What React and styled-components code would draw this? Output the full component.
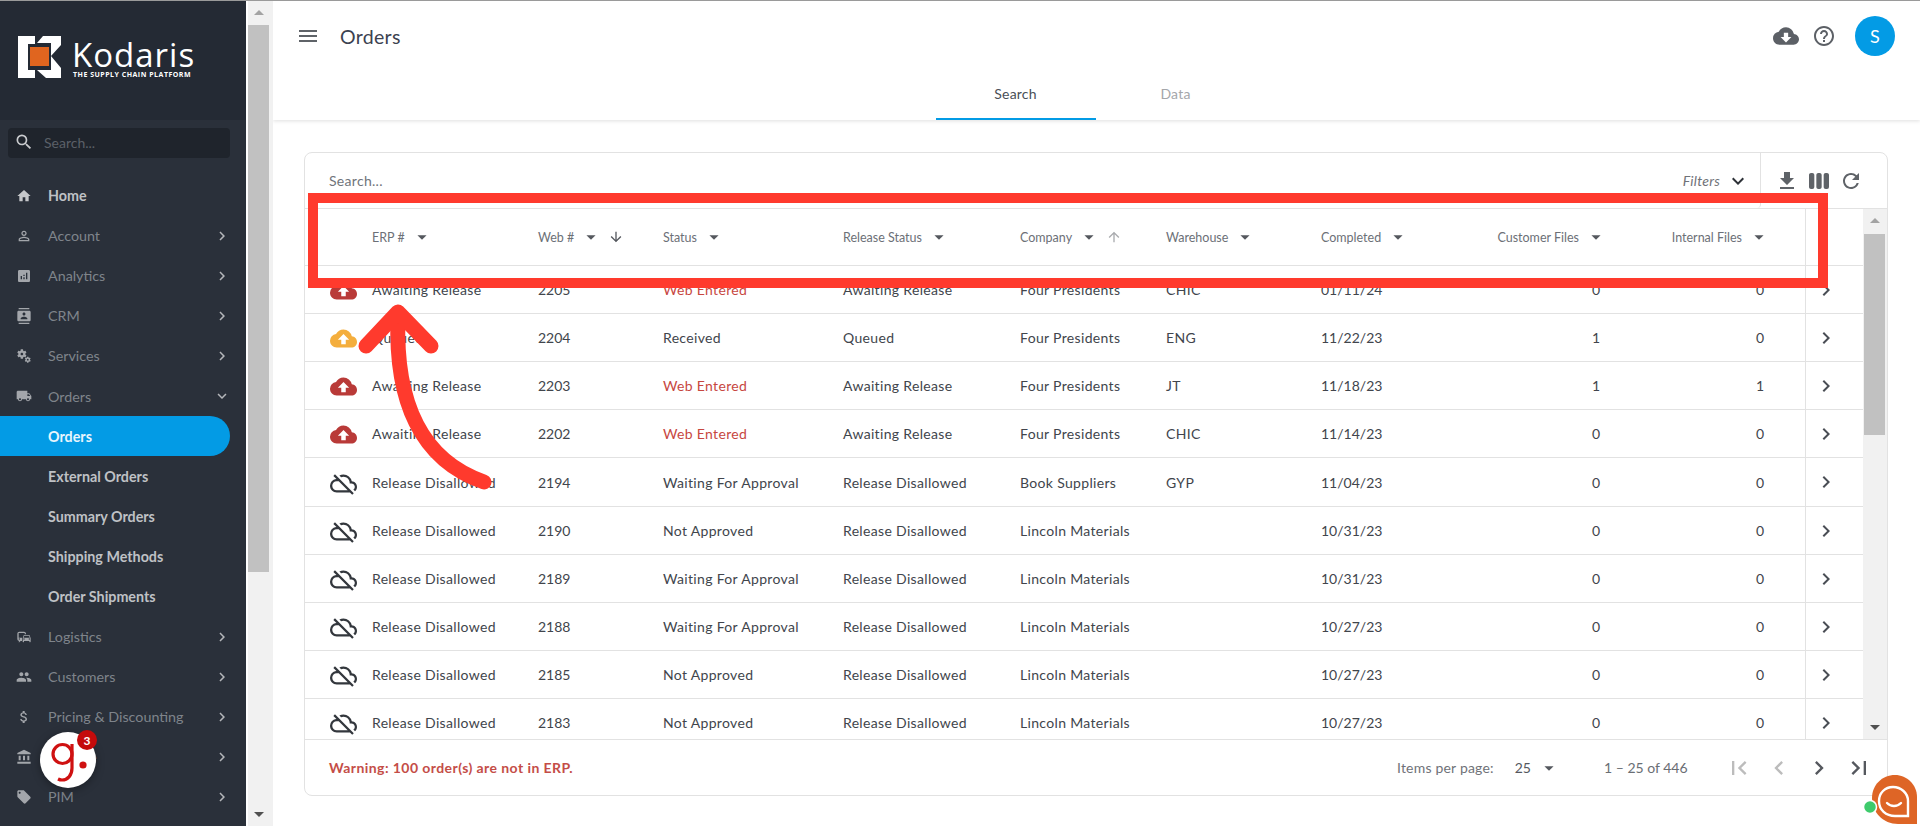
import React from "react";
import styled, { createGlobalStyle } from "styled-components";
import {
  MdHome,
  MdPermIdentity,
  MdAnalytics,
  MdContacts,
  MdMiscellaneousServices,
  MdLocalShipping,
  MdCommute,
  MdPeople,
  MdAttachMoney,
  MdAccountBalance,
  MdLocalOffer,
  MdChevronRight,
  MdChevronLeft,
  MdKeyboardArrowDown,
  MdSearch,
  MdMenu,
  MdCloudDownload,
  MdHelpOutline,
  MdFileDownload,
  MdViewWeek,
  MdRefresh,
  MdArrowDropDown,
  MdArrowDropUp,
  MdArrowDownward,
  MdArrowUpward,
  MdCloudUpload,
  MdOutlineCloudOff,
  MdFirstPage,
  MdLastPage,
} from "react-icons/md";

const FONT = `Lato, "Open Sans", sans-serif`;
const COLUMNS = "67px 166px 125px 180px 177px 146px 155px 160px 122px 202px 58px";

const GlobalStyle = createGlobalStyle`
  html, body {
    margin: 0;
    padding: 0;
    height: 100%;
    overflow: hidden;
    background: #fff;
    font-family: ${FONT};
  }
  * {
    box-sizing: border-box;
  }
`;

const Page = styled.div`
  position: relative;
  display: flex;
  width: 1920px;
  height: 826px;
  overflow: hidden;
  border-top: 1px solid #9a9a9a;
`;

/* sidebar */
const Sidebar = styled.aside`
  width: 246px;
  flex: none;
  background: #2a303a;
  overflow: hidden;
`;

const LogoBar = styled.div`
  display: flex;
  height: 119px;
  padding: 35px 0 0 18px;
  background: #242a34;
`;

const LogoText = styled.div`
  display: flex;
  flex-direction: column;
  margin-left: 10px;
  color: #fff;
`;

const LogoName = styled.span`
  font-family: "Open Sans", sans-serif;
  font-size: 33px;
  line-height: 28px;
  margin-top: 5px;
  letter-spacing: 1px;
`;

const LogoTag = styled.span`
  font-family: "Open Sans", sans-serif;
  font-size: 7px;
  font-weight: 700;
  line-height: 8px;
  letter-spacing: 0.5px;
  margin: 2px 0 0 1px;
  white-space: nowrap;
`;

const SideSearch = styled.div`
  display: flex;
  align-items: center;
  height: 30px;
  margin: 8px 16px 17.5px 8px;
  padding: 0 6px 2px 6px;
  gap: 10px;
  border-radius: 4px;
  background: #1f242c;
  color: #c9cbce;
  font-size: 14px;

  span {
    color: #5b6068;
  }
`;

const NavRow = styled.div`
  display: flex;
  align-items: center;
  height: 40.1px;
  width: 230px;
  padding: ${(p) => (p.$sub && !p.$active ? "1px" : "0")} 0 0 ${(p) => (p.$sub ? 48 : 16)}px;
  font-size: 14.3px;
  white-space: nowrap;
  font-weight: ${(p) => (p.$bright ? 700 : 400)};
  color: ${(p) => (p.$active ? "#e8f5fd" : p.$bright ? "#bfc1c5" : "#7f848b")};
  background: ${(p) => (p.$active ? "#039be5" : "transparent")};
  border-radius: ${(p) => (p.$active ? "0 20px 20px 0" : "0")};
`;

const NavIcon = styled.span`
  display: flex;
  justify-content: center;
  width: 16px;
  margin-right: 16px;
  font-size: 16px;
  color: ${(p) => (p.$bright ? "#c6c8cb" : "#a3a6ab")};
`;

const NavLabel = styled.span`
  flex: 1;
`;

const NavArrow = styled.span`
  display: flex;
  margin-right: -1px;
  font-size: 18px;
  color: #b4b6ba;
`;

const PageScroll = styled.div`
  position: relative;
  width: 27px;
  flex: none;
  background: #f1f1f1;
  border-left: 2px solid #fff;
  border-right: 4px solid #f1f1f1;
`;

const PageThumb = styled.div`
  position: absolute;
  top: 24px;
  left: 0;
  right: 0;
  height: 547px;
  background: #c1c1c1;
`;

const ScrollArrow = styled.span`
  position: absolute;
  left: 50%;
  transform: translateX(-50%);
  display: flex;
  font-size: 24px;
  color: ${(p) => (p.$dim ? "#a3a3a3" : "#505050")};
  ${(p) => (p.$up ? "top: 0;" : "bottom: 0;")}
`;

/* main */
const Main = styled.main`
  flex: 1;
  min-width: 0;
  display: flex;
  flex-direction: column;
  background: #fff;
`;

const TopBar = styled.header`
  height: 119px;
  flex: none;
  display: flex;
  flex-direction: column;
  box-shadow: 0 1px 4px rgba(0, 0, 0, 0.13);
`;

const TitleRow = styled.div`
  display: flex;
  align-items: center;
  height: 70px;
  padding: 0 25px 0 23px;
`;

const MenuIcon = styled.span`
  display: flex;
  font-size: 24px;
  color: #5f6368;
  margin-right: 20px;
`;

const Title = styled.h1`
  flex: 1;
  margin: 0;
  font-size: 19.5px;
  font-weight: 400;
  color: #3c4250;
  letter-spacing: 0.3px;
`;

const TopIcon = styled.span`
  display: flex;
  font-size: ${(p) => p.$size || 24}px;
  color: #5c6066;
  margin-right: ${(p) => p.$gap}px;
`;

const Avatar = styled.div`
  display: flex;
  align-items: center;
  justify-content: center;
  width: 40px;
  height: 40px;
  border-radius: 50%;
  background: #039be5;
  color: #fff;
  font-size: 18px;
`;

const Tabs = styled.nav`
  display: flex;
  justify-content: center;
  height: 49px;
  padding-right: 2px;
`;

const Tab = styled.div`
  display: flex;
  align-items: center;
  justify-content: center;
  width: 160px;
  padding-bottom: 3px;
  font-size: 14px;
  letter-spacing: 0.2px;
  color: ${(p) => (p.$active ? "#4a4f57" : "#a4a6aa")};
  border-bottom: 2px solid ${(p) => (p.$active ? "#039be5" : "transparent")};
`;

const Content = styled.div`
  padding: 32px 32px 32px 31px;
`;

const Card = styled.section`
  display: flex;
  flex-direction: column;
  height: 644px;
  border: 1px solid #e2e2e2;
  border-radius: 8px;
  overflow: hidden;
`;

const Toolbar = styled.div`
  display: flex;
  height: 56px;
  flex: none;
  border-bottom: 1px solid #e2e2e2;
`;

const ToolSearch = styled.div`
  flex: 1;
  display: flex;
  align-items: center;
  padding: 0 10px 0 24px;
  border-right: 1px solid #e2e2e2;
  border-radius: 0 0 4px 0;
  font-size: 14px;
  letter-spacing: 0.3px;
  color: #70747a;
`;

const ToolSearchText = styled.span`
  flex: 1;
`;

const FiltersLabel = styled.span`
  font-style: italic;
  font-size: 14px;
  letter-spacing: 0.25px;
  color: #6f7278;
  margin-right: 6px;
`;

const FiltersIcon = styled.span`
  display: flex;
  font-size: 24px;
  color: #2e3238;
`;

const ToolIcons = styled.div`
  display: flex;
  align-items: center;
  width: 126px;
  padding: 0 0 0 14px;
  gap: 8px;
  font-size: 24px;
  color: #5f6368;

  svg {
    display: block;
  }
`;

const GridWrap = styled.div`
  display: flex;
  flex: 1;
  min-height: 0;
`;

const Table = styled.div`
  flex: 1;
  min-width: 0;
  display: flex;
  flex-direction: column;
`;

const HeadRow = styled.div`
  display: grid;
  grid-template-columns: ${COLUMNS};
  height: 57px;
  flex: none;
  border-bottom: 1px solid #e2e2e2;
`;

const HeadCell = styled.div`
  display: flex;
  align-items: center;
  justify-content: ${(p) => (p.$right ? "flex-end" : "flex-start")};
  padding-right: ${(p) => p.$pad || 0}px;
  font-size: 12.5px;
  color: #6c7077;
  white-space: nowrap;
`;

const HeadCaret = styled.span`
  display: flex;
  margin-left: ${(p) => (p.$right ? 6 : 6)}px;
  margin-right: ${(p) => (p.$right ? -4 : 0)}px;
  font-size: 22px;
  color: #55585e;
`;

const SortArrow = styled.span`
  display: flex;
  margin-left: 6px;
  font-size: 16px;
  color: ${(p) => (p.$dim ? "#a9abae" : "#55585e")};
`;

const ActionCell = styled.div`
  display: flex;
  align-items: center;
  justify-content: center;
  border-left: 1px solid #e2e2e2;
  padding-right: 17px;
  font-size: 24px;
  color: #4a4e55;
`;

const Rows = styled.div`
  flex: 1;
  min-height: 0;
  overflow: hidden;
`;

const Row = styled.div`
  display: grid;
  grid-template-columns: ${COLUMNS};
  height: ${(p) => (p.$tall ? 49 : 48)}px;
  border-bottom: 1px solid #e2e2e2;
`;

const Cell = styled.div`
  display: flex;
  align-items: center;
  justify-content: ${(p) => (p.$right ? "flex-end" : "flex-start")};
  padding-right: ${(p) => p.$pad || 0}px;
  font-size: 14px;
  letter-spacing: ${(p) => (p.$num ? 0 : 0.33)}px;
  color: ${(p) => (p.$red ? "#c7473f" : "#41454c")};
  white-space: nowrap;
`;

const StatusIcon = styled.span`
  display: flex;
  justify-content: center;
  width: 100%;
  padding: 2px 0 0 9px;
  font-size: 27px;
  color: ${(p) => p.$color};
`;

const GridScroll = styled.div`
  position: relative;
  width: 24px;
  flex: none;
  background: #f1f1f1;
  border-left: 1px solid #f1f1f1;
  border-right: 2px solid #f1f1f1;
`;

const GridThumb = styled.div`
  position: absolute;
  top: 25px;
  left: 0;
  right: 0;
  height: 201px;
  background: #c1c1c1;
`;

const Footer = styled.footer`
  display: flex;
  align-items: center;
  height: 56px;
  flex: none;
  padding: 0 8px 0 24px;
  border-top: 1px solid #e2e2e2;
  font-size: 14px;
  color: #6f7278;
`;

const Warning = styled.span`
  flex: 1;
  font-weight: 700;
  letter-spacing: 0.43px;
  color: #c44d47;
`;

const PageLabel = styled.span`
  letter-spacing: 0.2px;
`;

const PageSizeValue = styled.span`
  margin-left: 21px;
  color: #55585e;
`;

const PageCaret = styled.span`
  display: flex;
  margin: 0 44px 0 7px;
  font-size: 22px;
  color: #55585e;
`;

const RangeText = styled.span`
  width: 115px;
  color: #6a6e74;
`;

const PageIcon = styled.span`
  display: flex;
  justify-content: center;
  width: 40px;
  font-size: 28px;
  color: ${(p) => (p.$off ? "#bcbcbc" : "#55585e")};
`;

/* things lying over the page */
const Annotation = styled.svg`
  position: absolute;
  left: 0;
  top: -1px;
  pointer-events: none;
`;

const GrooveWidget = styled.div`
  position: absolute;
  left: 40px;
  top: 731px;
  width: 56px;
  height: 56px;
  border-radius: 50%;
  background: #fff;
  box-shadow: 0 2px 8px rgba(0, 0, 0, 0.35);
`;

const GrooveBadge = styled.span`
  position: absolute;
  right: -1px;
  top: -2px;
  display: flex;
  align-items: center;
  justify-content: center;
  width: 20px;
  height: 20px;
  border-radius: 50%;
  background: #c40b0b;
  color: #fff;
  font-size: 12px;
  font-weight: 700;
`;

const ChatWidget = styled.svg`
  position: absolute;
  left: 1860px;
  top: 769px;
`;

const navTop = [
  { icon: MdHome, label: "Home", bright: true },
  { icon: MdPermIdentity, label: "Account", more: true },
  { icon: MdAnalytics, label: "Analytics", more: true },
  { icon: MdContacts, label: "CRM", more: true },
  { icon: MdMiscellaneousServices, label: "Services", more: true },
  { icon: MdLocalShipping, label: "Orders", open: true },
  { label: "Orders", sub: true, active: true },
  { label: "External Orders", sub: true },
  { label: "Summary Orders", sub: true },
  { label: "Shipping Methods", sub: true },
  { label: "Order Shipments", sub: true },
  { icon: MdCommute, label: "Logistics", more: true },
  { icon: MdPeople, label: "Customers", more: true },
  { icon: MdAttachMoney, label: "Pricing & Discounting", more: true },
  { icon: MdAccountBalance, label: "Finance", more: true },
  { icon: MdLocalOffer, label: "PIM", more: true },
];

const headers = [
  { label: "" },
  { label: "ERP #", caret: true },
  { label: "Web #", caret: true, sort: "down" },
  { label: "Status", caret: true },
  { label: "Release Status", caret: true },
  { label: "Company", caret: true, sort: "up" },
  { label: "Warehouse", caret: true },
  { label: "Completed", caret: true },
  { label: "Customer Files", caret: true, right: true },
  { label: "Internal Files", caret: true, right: true, pad: 39 },
];

const RED = "#b93a38";
const AMBER = "#f4ae3d";
const INK = "#33373d";

const orders = [
  ["up", RED, "Awaiting Release", "2205", "Web Entered", "Awaiting Release", "Four Presidents", "CHIC", "01/11/24", "0", "0"],
  ["up", AMBER, "Queued", "2204", "Received", "Queued", "Four Presidents", "ENG", "11/22/23", "1", "0"],
  ["up", RED, "Awaiting Release", "2203", "Web Entered", "Awaiting Release", "Four Presidents", "JT", "11/18/23", "1", "1"],
  ["up", RED, "Awaiting Release", "2202", "Web Entered", "Awaiting Release", "Four Presidents", "CHIC", "11/14/23", "0", "0"],
  ["off", INK, "Release Disallowed", "2194", "Waiting For Approval", "Release Disallowed", "Book Suppliers", "GYP", "11/04/23", "0", "0"],
  ["off", INK, "Release Disallowed", "2190", "Not Approved", "Release Disallowed", "Lincoln Materials", "", "10/31/23", "0", "0"],
  ["off", INK, "Release Disallowed", "2189", "Waiting For Approval", "Release Disallowed", "Lincoln Materials", "", "10/31/23", "0", "0"],
  ["off", INK, "Release Disallowed", "2188", "Waiting For Approval", "Release Disallowed", "Lincoln Materials", "", "10/27/23", "0", "0"],
  ["off", INK, "Release Disallowed", "2185", "Not Approved", "Release Disallowed", "Lincoln Materials", "", "10/27/23", "0", "0"],
  ["off", INK, "Release Disallowed", "2183", "Not Approved", "Release Disallowed", "Lincoln Materials", "", "10/27/23", "0", "0"],
];

function Logo() {
  return (
    <svg width="44" height="44" viewBox="18 36 44 44">
      <path d="M18 36h17v8h-7v26h7v8H18z" fill="#fff" />
      <path d="M43 36h18v9l-10 11 10 12v10H46l-9-8h14v-2l-7-6v-10l7-7v-2H37z" fill="#fff" />
      <rect x="28" y="45" width="23" height="23" fill="#242a34" />
      <rect x="30" y="47" width="19" height="19" fill="#e0651f" />
    </svg>
  );
}

function Head({ head }) {
  return (
    <HeadCell $right={head.right} $pad={head.pad}>
      {head.label}
      {head.caret && (
        <HeadCaret $right={head.right}>
          <MdArrowDropDown />
        </HeadCaret>
      )}
      {head.sort === "down" && (
        <SortArrow>
          <MdArrowDownward />
        </SortArrow>
      )}
      {head.sort === "up" && (
        <SortArrow $dim>
          <MdArrowUpward />
        </SortArrow>
      )}
    </HeadCell>
  );
}

function OrderRow({ order, tall }) {
  const [kind, color, erp, web, status, release, company, warehouse, completed, customer, internal] = order;
  const Icon = kind === "up" ? MdCloudUpload : MdOutlineCloudOff;
  return (
    <Row $tall={tall}>
      <Cell>
        <StatusIcon $color={color}>
          <Icon />
        </StatusIcon>
      </Cell>
      <Cell>{erp}</Cell>
      <Cell $num>{web}</Cell>
      <Cell $red={status === "Web Entered"}>{status}</Cell>
      <Cell>{release}</Cell>
      <Cell>{company}</Cell>
      <Cell>{warehouse}</Cell>
      <Cell $num>{completed}</Cell>
      <Cell $right $num $pad={3}>{customer}</Cell>
      <Cell $right $num $pad={41}>{internal}</Cell>
      <ActionCell>
        <MdChevronRight />
      </ActionCell>
    </Row>
  );
}

export default function App() {
  return (
    <>
      <GlobalStyle />
      <Page>
        <Sidebar>
          <LogoBar>
            <Logo />
            <LogoText>
              <LogoName>Kodaris</LogoName>
              <LogoTag>THE SUPPLY CHAIN PLATFORM</LogoTag>
            </LogoText>
          </LogoBar>
          <SideSearch>
            <MdSearch size={20} />
            <span>Search...</span>
          </SideSearch>
          {navTop.map((item, i) => {
            const Icon = item.icon;
            return (
              <NavRow key={i} $sub={item.sub} $active={item.active} $bright={item.sub || item.bright}>
                {Icon && (
                  <NavIcon $bright={item.bright}>
                    <Icon />
                  </NavIcon>
                )}
                <NavLabel>{item.label}</NavLabel>
                {item.more && (
                  <NavArrow>
                    <MdChevronRight />
                  </NavArrow>
                )}
                {item.open && (
                  <NavArrow>
                    <MdKeyboardArrowDown />
                  </NavArrow>
                )}
              </NavRow>
            );
          })}
        </Sidebar>
        <PageScroll>
          <PageThumb />
          <ScrollArrow $up $dim>
            <MdArrowDropUp />
          </ScrollArrow>
          <ScrollArrow>
            <MdArrowDropDown />
          </ScrollArrow>
        </PageScroll>

        <Main>
          <TopBar>
            <TitleRow>
              <MenuIcon>
                <MdMenu />
              </MenuIcon>
              <Title>Orders</Title>
              <TopIcon $size={26} $gap={13}>
                <MdCloudDownload />
              </TopIcon>
              <TopIcon $gap={19}>
                <MdHelpOutline />
              </TopIcon>
              <Avatar>S</Avatar>
            </TitleRow>
            <Tabs>
              <Tab $active>Search</Tab>
              <Tab>Data</Tab>
            </Tabs>
          </TopBar>

          <Content>
            <Card>
              <Toolbar>
                <ToolSearch>
                  <ToolSearchText>Search...</ToolSearchText>
                  <FiltersLabel>Filters</FiltersLabel>
                  <FiltersIcon>
                    <MdKeyboardArrowDown />
                  </FiltersIcon>
                </ToolSearch>
                <ToolIcons>
                  <MdFileDownload />
                  <MdViewWeek />
                  <MdRefresh />
                </ToolIcons>
              </Toolbar>
              <GridWrap>
                <Table>
                  <HeadRow>
                    {headers.map((head, i) => (
                      <Head key={i} head={head} />
                    ))}
                    <ActionCell />
                  </HeadRow>
                  <Rows>
                    {orders.map((order, i) => (
                      <OrderRow key={order[3]} order={order} tall={i === 4} />
                    ))}
                  </Rows>
                </Table>
                <GridScroll>
                  <GridThumb />
                  <ScrollArrow $up $dim>
                    <MdArrowDropUp />
                  </ScrollArrow>
                  <ScrollArrow>
                    <MdArrowDropDown />
                  </ScrollArrow>
                </GridScroll>
              </GridWrap>
              <Footer>
                <Warning>Warning: 100 order(s) are not in ERP.</Warning>
                <PageLabel>Items per page:</PageLabel>
                <PageSizeValue>25</PageSizeValue>
                <PageCaret>
                  <MdArrowDropDown />
                </PageCaret>
                <RangeText>1 – 25 of 446</RangeText>
                <PageIcon $off>
                  <MdFirstPage />
                </PageIcon>
                <PageIcon $off>
                  <MdChevronLeft />
                </PageIcon>
                <PageIcon>
                  <MdChevronRight />
                </PageIcon>
                <PageIcon>
                  <MdLastPage />
                </PageIcon>
              </Footer>
            </Card>
          </Content>
        </Main>

        <Annotation width="1920" height="826" viewBox="0 0 1920 826">
          <rect x="313" y="198" width="1510" height="85" fill="none" stroke="#ff3a2d" strokeWidth="10" />
          <path
            d="M484 482 C 420 460 395 400 398 318"
            fill="none"
            stroke="#ff3a2d"
            strokeWidth="15"
            strokeLinecap="round"
          />
          <path
            d="M366 346 L398 312 L431 346"
            fill="none"
            stroke="#ff3a2d"
            strokeWidth="15"
            strokeLinecap="round"
            strokeLinejoin="round"
          />
        </Annotation>

        <GrooveWidget>
          <svg width="56" height="56" viewBox="0 0 56 56">
            <circle cx="22.5" cy="22" r="9.5" fill="none" stroke="#cf1111" strokeWidth="3.2" />
            <path d="M32 12v24c0 7-4 12-10 12-2 0-3-.5-4-1" fill="none" stroke="#cf1111" strokeWidth="3.2" />
            <circle cx="43" cy="33" r="3.6" fill="#cf1111" />
          </svg>
          <GrooveBadge>3</GrooveBadge>
        </GrooveWidget>

        <ChatWidget width="60" height="56" viewBox="0 0 60 56">
          <path
            d="M35 5C22 5 12 15 12 28C12 42 23 54 38 54H57V27C57 15 47 5 35 5z"
            fill="#de6526"
          />
          <path
            d="M33 17C25 17 19 23 19 31C19 40 26 46 35 46H48V31C48 23 41 17 33 17z"
            fill="none"
            stroke="#fff"
            strokeWidth="2.4"
          />
          <path d="M27 33c4 4 10 4 14 0" fill="none" stroke="#fff" strokeWidth="2.4" strokeLinecap="round" />
          <circle cx="10" cy="37" r="6.5" fill="#3ecb6c" stroke="#fff" strokeWidth="1.5" />
        </ChatWidget>
      </Page>
    </>
  );
}
